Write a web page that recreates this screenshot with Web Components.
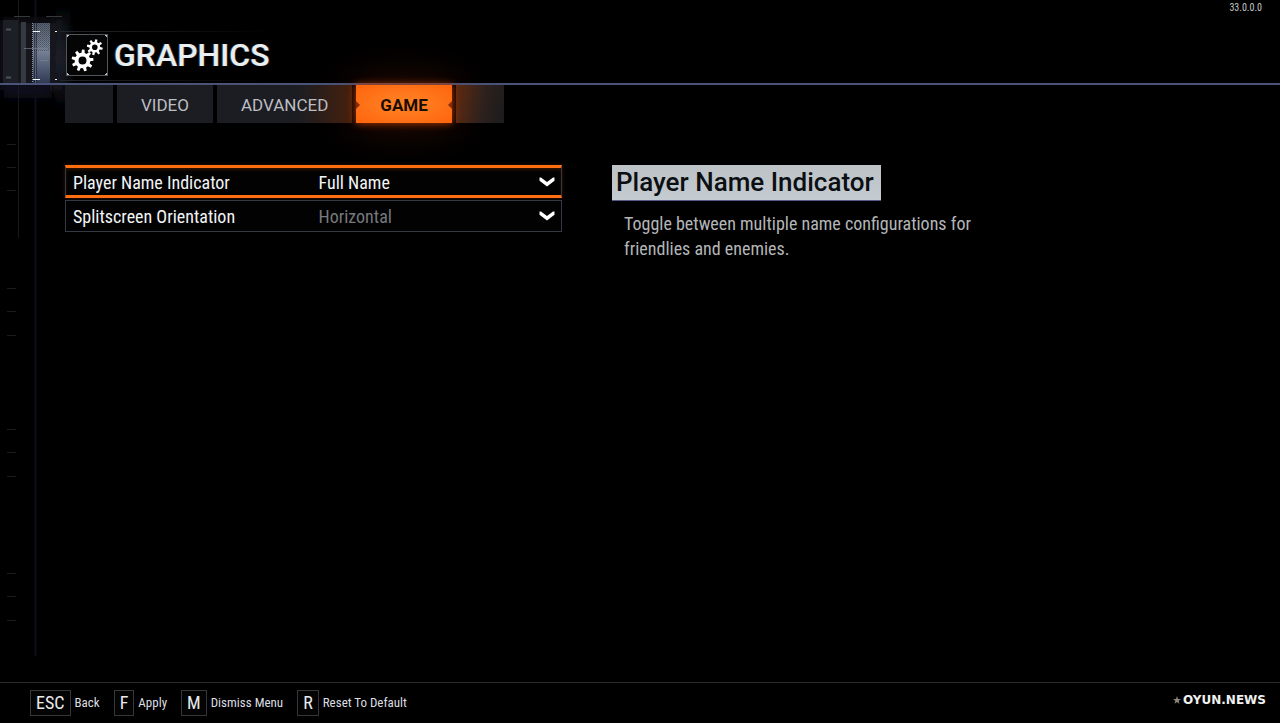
<!DOCTYPE html>
<html lang="en">
<head>
<meta charset="utf-8">
<meta name="viewport" content="width=device-width, initial-scale=1">
<title>Graphics settings</title>
<style>
  html { background: #000; }
  body {
    margin: 0;
    color: #f2f4f6;
    --narrow: "Roboto Condensed", "Liberation Sans Narrow", Roboto, sans-serif;
    --wide: Roboto, sans-serif;
    --accent: #ff6f12;
    font-family: var(--narrow);
  }
</style>
</head>
<body>
<settings-screen></settings-screen>

<script>
const define = (name, html, setup) => {
  const template = document.createElement('template');
  template.innerHTML = html;
  customElements.define(name, class extends HTMLElement {
    constructor() {
      super();
      this.attachShadow({ mode: 'open' }).append(template.content.cloneNode(true));
    }
    connectedCallback() {
      if (setup && !this.ready) { this.ready = true; setup(this, this.shadowRoot); }
    }
  });
};

/* Builds the outline of a toothed wheel */
const gear = (cx, cy, teeth, outer, inner, hole, turn) => {
  const pts = [];
  const step = Math.PI * 2 / teeth;
  for (let i = 0; i < teeth; i++) {
    const a = i * step + turn;
    [[-0.30, inner], [-0.17, outer], [0.17, outer], [0.30, inner]].forEach(([k, r]) =>
      pts.push((cx + r * Math.cos(a + k * step)).toFixed(2) + ' ' + (cy + r * Math.sin(a + k * step)).toFixed(2)));
  }
  return `M${pts.join('L')}ZM${cx - hole} ${cy}a${hole} ${hole} 0 1 0 ${hole * 2} 0a${hole} ${hole} 0 1 0 ${-hole * 2} 0Z`;
};

define('hud-backdrop', `
  <style>
    :host { position: absolute; inset: 0 auto auto 0; pointer-events: none; }
    svg { display: block; }
  </style>
  <svg width="300" height="660" viewBox="0 0 300 660" aria-hidden="true">
    <defs>
      <linearGradient id="bar" x1="0" y1="0" x2="0" y2="1">
        <stop offset="0" stop-color="#56606f"/><stop offset=".45" stop-color="#788398"/><stop offset="1" stop-color="#303a55"/>
      </linearGradient>
      <linearGradient id="haze" x1="0" y1="0" x2="0" y2="1">
        <stop offset="0" stop-color="#1c2029" stop-opacity="0"/><stop offset=".5" stop-color="#1c2029"/><stop offset="1" stop-color="#121528" stop-opacity="0"/>
      </linearGradient>
      <linearGradient id="rule" x1="0" x2="1">
        <stop offset="0" stop-color="#23272b"/><stop offset="1" stop-color="#23272b" stop-opacity="0"/>
      </linearGradient>
      <pattern id="dots" width="2" height="2" patternUnits="userSpaceOnUse">
        <rect width="1" height="1" fill="#000" opacity=".3"/><rect x="1" y="1" width="1" height="1" fill="#000" opacity=".2"/>
      </pattern>
      <filter id="soft"><feGaussianBlur stdDeviation="4"/></filter>
    </defs>
    <g filter="url(#soft)">
      <rect x="0" y="20" width="62" height="70" fill="#12151b"/>
      <rect x="56" y="2" width="14" height="114" fill="url(#haze)"/>
      <rect x="4" y="84" width="46" height="14" fill="#0c0e1a"/>
    </g>
    <rect x="3" y="20" width="16" height="63" fill="#1c1f25"/>
    <rect x="21" y="22" width="5" height="61" fill="#343a42"/>
    <rect x="33" y="23" width="17" height="60" fill="url(#bar)"/>
    <rect x="33" y="23" width="17" height="28" fill="url(#dots)"/>
    <path d="M32.500 23V83" stroke="#8e949c" stroke-dasharray="1 1"/>
    <path d="M18.500 0V238" stroke="#16181d"/>
    <path d="M35.500 0V656" stroke="#0d0e16" stroke-width="2"/>
    <path d="M35.500 23V83" stroke="#56607a"/>
    <path d="M14 16.500H30M46 16.500H62" stroke="#343a3c"/>
    <path d="M6 29.500H11M6 77.500H11" stroke="#4b525c" stroke-width="2"/>
    <path d="M24 48.500H48M40 60.500H48" stroke="#7c879b" opacity=".6"/>
    <path d="M33 31.500H40M33 79.500H40M55 31.500H57M55 79.500H57" stroke="#f4f6f8"/>
    <rect x="60" y="31" width="210" height="1" fill="url(#rule)"/>
    <rect x="60" y="80" width="210" height="1" fill="url(#rule)"/>
    <path id="ticks" stroke="#1a1b1d"/>
  </svg>`,
  (host, root) => {
    const rows = [144, 167, 190, 288, 311, 335, 429, 452, 476, 573, 596, 620];
    root.getElementById('ticks').setAttribute('d', rows.map(y => `M7 ${y}.500H16`).join(''));
  });

define('gear-badge', `
  <style>
    :host { display: block; width: 40px; height: 40px; border: 1px solid #50565c; background: #050506; }
    svg { display: block; }
  </style>
  <svg width="40" height="40" viewBox="0 0 40 40" aria-hidden="true">
    <path fill="#fff" fill-rule="evenodd"/>
    <path d="M0 0h2v1h-1v1h-1zM40 0h-2v1h1v1h1zM0 40h2v-1h-1v-1h-1zM40 40h-2v-1h1v-1h1z" fill="#b9bfc4"/>
  </svg>`,
  (host, root) => root.querySelector('path').setAttribute('d',
    gear(15.5, 25.5, 9, 11, 7.8, 4, -0.1) + gear(27.8, 12.2, 8, 8, 5.4, 2.8, 0.2)));

define('screen-header', `
  <style>
    :host { display: flex; align-items: center; justify-content: space-between; height: 83px;
            padding: 0 18px 0 66px; border-bottom: 2px solid #4a5378; }
    .name { display: flex; align-items: center; gap: 6px; padding-top: 26px; }
    h1 { margin: 0; font: 500 32px/40px var(--wide); color: #e9eef1;
         text-shadow: -1px 0 #5a9ab080, 1px 0 #a0504060; }
    .version { align-self: flex-start; padding-top: 2px; font-size: 10px; line-height: 12px; color: #c4c6c8; }
  </style>
  <div class="name"><gear-badge></gear-badge><h1><slot></slot></h1></div>
  <div class="version"><slot name="version"></slot></div>`);

define('menu-tab', `
  <style>
    :host { display: block; min-width: 48px; background: #1c1d22; }
    button { display: block; box-sizing: border-box; width: 100%; height: 38px; padding: 0 24px; border: 0;
             background: none; color: #bcbec2; font: 400 17px/40px var(--wide); }
    :host([active]) { position: relative; background: radial-gradient(#ff7e22 20%, #ff640c);
             box-shadow: 0 0 8px #b83c00, 0 0 44px #8a2c0066; }
    :host([active]) button { color: #1a0c04; font-weight: 700; }
    :host([active])::before, :host([active])::after { content: ""; position: absolute; top: 16px;
             border: 4px solid transparent; }
    :host([active])::before { left: 0; border-left-color: #8e2c08; border-right: 0; }
    :host([active])::after { right: 0; border-right-color: #8e2c08; border-left: 0; }
    :host([glow=right]) { background: linear-gradient(90deg, #1c1d22 60%, #42200f); }
  </style>
  <button type="button" role="tab"><slot></slot></button>`,
  (host, root) => root.querySelector('button').setAttribute('aria-selected', host.hasAttribute('active')));

define('tab-bar', `
  <style>:host { display: flex; gap: 4px; padding-left: 65px; height: 38px; }
    .end { width: 48px; background: #1b1c21; }
    .last { background: linear-gradient(100deg, #5c2a12, #2d221e 55%, #1d1b1d); }
  </style>
  <div class="end"></div><slot></slot><div class="end last"></div>`);

define('setting-row', `
  <style>
    :host { display: grid; grid-template-columns: 1fr 1fr; box-sizing: border-box; height: 32px;
            align-items: center; border: 1px solid #343844; background: #020203; }
    :host([active]) { height: 33px; border-top: 3px solid var(--accent); border-bottom: 3px solid var(--accent);
            box-shadow: inset 0 2px 3px #5a240080, 0 0 4px #6a280080; }
    label { padding: 2px 0 0 7px; font-size: 18px; line-height: 24px; white-space: nowrap; }
    .pick { display: flex; align-items: center; padding-right: 6px; }
    select { appearance: none; flex: 1; min-width: 0; height: 26px; padding: 2px 0 0 5px; margin: 0 -16px 0 0; border: 0;
             background: none; color: #77797c; font: 18px/24px var(--narrow); }
    :host([active]) select { color: #f2f4f6; }
    svg { flex: none; pointer-events: none; }
  </style>
  <label for="value"></label>
  <div class="pick">
    <select id="value"></select>
    <svg width="16" height="10" viewBox="0 0 16 10" aria-hidden="true"><path d="M0.500 0.500H2L8 5L14 0.500H15.500V3.700L8 9.500L0.500 3.700Z" fill="#fff"/></svg>
  </div>`,
  (host, root) => {
    root.querySelector('label').textContent = host.getAttribute('label');
    root.querySelector('select').add(new Option(host.getAttribute('value')));
  });

define('setting-help', `
  <style>
    :host { display: block; }
    h2 { width: fit-content; margin: 0; padding: 0 7px 0 4px; background: linear-gradient(#bcc2c5, #c4cbd1); color: #0c0f12;
         font: 500 26px/35px var(--wide); border-bottom: 1px solid #555b86; }
    p { max-width: 356px; margin: 10px 0 0; padding-left: 12px; font-size: 18px; line-height: 25px; color: #b4b6b8; }
  </style>
  <h2><slot name="title"></slot></h2>
  <p><slot></slot></p>`);

define('key-hint', `
  <style>
    :host { display: block; }
    button { display: flex; align-items: center; gap: 4px; padding: 0; border: 0; background: none; color: #dcdee0;
             font: 13px/24px var(--narrow); white-space: nowrap; }
    kbd { padding: 0 5px; border: 1px solid #34363a; background: #040405; font: 18px/24px var(--narrow); color: #e8eaec; }
  </style>
  <button type="button"><kbd></kbd><span><slot></slot></span></button>`,
  (host, root) => { root.querySelector('kbd').textContent = host.getAttribute('key'); });

define('screen-footer', `
  <style>
    :host { display: flex; align-items: center; justify-content: space-between; height: 40px;
            padding: 0 14px 0 30px; border-top: 1px solid #2b2c2f; }
    nav { display: flex; gap: 14px; }
    .brand { display: flex; align-items: center; gap: 2px; font: 700 12px/16px "DejaVu Sans", sans-serif; color: #f0f0f0;
             padding-bottom: 6px; }
  </style>
  <nav aria-label="Shortcuts"><slot></slot></nav>
  <div class="brand">
    <svg width="8" height="8" viewBox="0 0 10 10" aria-hidden="true"><path d="M5 0L6.200 3.600H10L7 5.900L8.100 9.800L5 7.400L1.900 9.800L3 5.900L0 3.600H3.800Z" fill="#8c8c80"/></svg>
    <slot name="brand"></slot>
  </div>`);

define('settings-screen', `
  <style>
    :host { position: relative; display: flex; flex-direction: column; min-height: 100vh; background: #000; overflow: hidden; }
    screen-header, tab-bar, main, screen-footer { position: relative; }
    main { flex: 1; display: grid; grid-template-columns: 497fr 668fr; column-gap: 50px; align-items: start;
           padding: 42px 0 16px 65px; }
    .rows { display: grid; gap: 2px; }
  </style>
  <hud-backdrop></hud-backdrop>
  <screen-header>GRAPHICS<span slot="version">33.0.0.0</span></screen-header>
  <tab-bar role="tablist">
    <menu-tab>VIDEO</menu-tab>
    <menu-tab glow="right">ADVANCED</menu-tab>
    <menu-tab active>GAME</menu-tab>
  </tab-bar>
  <main>
    <div class="rows">
      <setting-row active label="Player Name Indicator" value="Full Name"></setting-row>
      <setting-row label="Splitscreen Orientation" value="Horizontal"></setting-row>
    </div>
    <setting-help>
      <span slot="title">Player Name Indicator</span>
      Toggle between multiple name configurations for friendlies and enemies.
    </setting-help>
  </main>
  <screen-footer>
    <key-hint key="ESC">Back</key-hint>
    <key-hint key="F">Apply</key-hint>
    <key-hint key="M">Dismiss Menu</key-hint>
    <key-hint key="R">Reset To Default</key-hint>
    <span slot="brand">OYUN.NEWS</span>
  </screen-footer>`);
</script>
</body>
</html>
